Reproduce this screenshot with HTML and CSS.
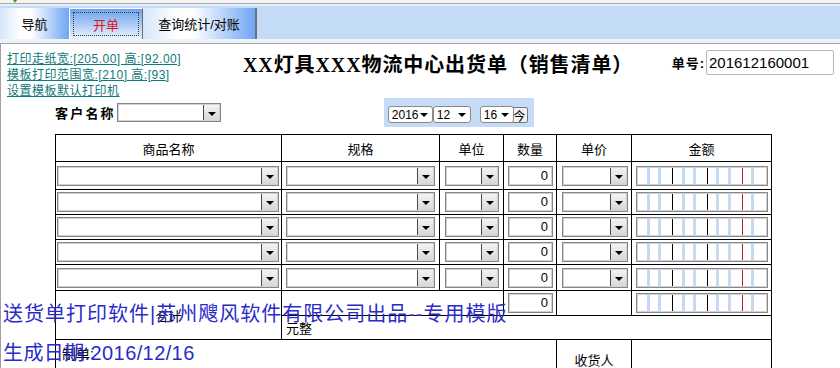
FILE: index.html
```
<!DOCTYPE html>
<html lang="zh-CN">

<head>
    <meta charset="UTF-8">
    <title>出货单</title>
    <link rel="stylesheet" href="styles.css">
</head>

<body>
    <div class="topbar"><span class="mark"></span></div>

    <div class="toolbar">
        <div class="tab tab-nav">导航</div>
        <div class="tab tab-on"><span class="focus">开单</span></div>
        <div class="tab tab-query">查询统计/对账</div>
    </div>

    <div class="sheet">
        <div class="head">
            <div class="links">
                <a href="#">打印走纸宽:[205.00] 高:[92.00]</a>
                <a href="#">模板打印范围宽:[210] 高:[93]</a>
                <a href="#">设置模板默认打印机</a>
            </div>
            <h1 class="title">XX灯具XXX物流中心出货单（销售清单）</h1>
            <div class="billno">
                <b>单号:</b>
                <span class="billno-box">201612160001</span>
            </div>
        </div>

        <div class="meta">
            <b class="cust-label">客户名称</b>
            <div class="combo cust"><span class="drop"></span></div>
            <div class="datebar">
                <span class="dsel dsel-y">2016</span>
                <span class="dsel dsel-m">12</span>
                <span class="dsel dsel-d">16</span>
                <span class="today">今</span>
            </div>
        </div>

        <table class="bill">
            <colgroup>
                <col class="w-name">
                <col class="w-spec">
                <col class="w-unit">
                <col class="w-qty">
                <col class="w-price">
                <col class="w-money">
            </colgroup>
            <tr class="row-head">
                <th>商品名称</th>
                <th>规格</th>
                <th>单位</th>
                <th>数量</th>
                <th>单价</th>
                <th>金额</th>
            </tr>
            <tr class="row-1">
                <td><div class="combo c-name"><span class="drop"></span></div></td>
                <td><div class="combo c-spec"><span class="drop"></span></div></td>
                <td><div class="combo c-unit"><span class="drop"></span></div></td>
                <td><div class="qty">0</div></td>
                <td><div class="combo c-price"><span class="drop"></span></div></td>
                <td><div class="money"><i></i><i></i><i class="k"></i><i></i><i></i><i class="k"></i><i></i><i></i><i class="r"></i><i></i><i class="e"></i></div></td>
            </tr>
            <tr>
                <td><div class="combo c-name"><span class="drop"></span></div></td>
                <td><div class="combo c-spec"><span class="drop"></span></div></td>
                <td><div class="combo c-unit"><span class="drop"></span></div></td>
                <td><div class="qty">0</div></td>
                <td><div class="combo c-price"><span class="drop"></span></div></td>
                <td><div class="money"><i></i><i></i><i class="k"></i><i></i><i></i><i class="k"></i><i></i><i></i><i class="r"></i><i></i><i class="e"></i></div></td>
            </tr>
            <tr>
                <td><div class="combo c-name"><span class="drop"></span></div></td>
                <td><div class="combo c-spec"><span class="drop"></span></div></td>
                <td><div class="combo c-unit"><span class="drop"></span></div></td>
                <td><div class="qty">0</div></td>
                <td><div class="combo c-price"><span class="drop"></span></div></td>
                <td><div class="money"><i></i><i></i><i class="k"></i><i></i><i></i><i class="k"></i><i></i><i></i><i class="r"></i><i></i><i class="e"></i></div></td>
            </tr>
            <tr>
                <td><div class="combo c-name"><span class="drop"></span></div></td>
                <td><div class="combo c-spec"><span class="drop"></span></div></td>
                <td><div class="combo c-unit"><span class="drop"></span></div></td>
                <td><div class="qty">0</div></td>
                <td><div class="combo c-price"><span class="drop"></span></div></td>
                <td><div class="money"><i></i><i></i><i class="k"></i><i></i><i></i><i class="k"></i><i></i><i></i><i class="r"></i><i></i><i class="e"></i></div></td>
            </tr>
            <tr class="row-5">
                <td><div class="combo c-name"><span class="drop"></span></div></td>
                <td><div class="combo c-spec"><span class="drop"></span></div></td>
                <td><div class="combo c-unit"><span class="drop"></span></div></td>
                <td><div class="qty">0</div></td>
                <td><div class="combo c-price"><span class="drop"></span></div></td>
                <td><div class="money"><i></i><i></i><i class="k"></i><i></i><i></i><i class="k"></i><i></i><i></i><i class="r"></i><i></i><i class="e"></i></div></td>
            </tr>
            <tr class="row-sum">
                <td rowspan="2" class="sum-label">合计</td>
                <td colspan="2"></td>
                <td><div class="qty">0</div></td>
                <td></td>
                <td><div class="money"><i></i><i></i><i class="k"></i><i></i><i></i><i class="k"></i><i></i><i></i><i class="r"></i><i></i><i class="e"></i></div></td>
            </tr>
            <tr class="row-words">
                <td colspan="5" class="words">元整</td>
            </tr>
            <tr class="row-sign">
                <td colspan="4" class="maker">制单:</td>
                <td class="receiver">收货人</td>
                <td></td>
            </tr>
        </table>

        <div class="stamp">
            <p>送货单打印软件|苏州飕风软件有限公司出品--专用模版</p>
            <p>生成日期:2016/12/16</p>
        </div>
    </div>
</body>

</html>
```

FILE: styles.css
```
* {
    margin: 0;
    padding: 0;
    box-sizing: border-box;
}

html,
body {
    height: 368px;
    overflow: hidden;
}

body {
    font-family: "Liberation Sans", "Noto Sans CJK SC", sans-serif;
    font-size: 13px;
    color: #000;
    background: #fff;
}

/* top strip + tab bar */
.topbar {
    height: 4px;
    background: #f3f3f3;
    border-bottom: 1px solid #a9a9a9;
    position: relative;
}

.mark {
    position: absolute;
    left: 13px;
    top: 0;
    border-left: 2px solid transparent;
    border-right: 2px solid transparent;
    border-top: 3px solid #3c9c1c;
}

.toolbar {
    height: 40px;
    padding-top: 4px;
    display: flex;
    background: linear-gradient(#e8f0fb 0, #e8f0fb 2px, #c3dbf7 2px, #c3dbf7 35px, #eef3fa 35px);
    border-bottom: 1px solid #a4a4a4;
}

.tab {
    height: 31px;
    display: flex;
    justify-content: center;
    align-items: center;
    font-size: 13px;
    background: linear-gradient(to right, #d6e6fb, #ffffff 30%, #ffffff 45%, #6ea6f3);
}

.tab-nav {
    width: 69px;
}

.tab-on {
    width: 74px;
    padding: 3px;
    color: #e0141c;
    background: linear-gradient(#6fa2ee, #a4c5f5 45%, #eef4fc);
    border-top: 1px solid #fff;
    border-left: 1px solid #fff;
    border-right: 1px solid #6a6a6a;
}

.focus {
    flex: 1;
    align-self: stretch;
    display: flex;
    justify-content: center;
    align-items: center;
    border: 1px dotted #1f4a2a;
}

.tab-query {
    width: 114px;
    border-right: 2px solid #707070;
}

/* sheet */
.sheet {
    position: relative;
    height: 325px;
    border-left: 1px solid #a0a0a0;
}

.head {
    display: flex;
    height: 53px;
}

.links {
    width: 242px;
    padding: 7px 0 0 6px;
    display: flex;
    flex-direction: column;
    align-items: flex-start;
}

.links a {
    font-size: 12px;
    line-height: 16px;
    letter-spacing: 0.5px;
    color: #0f7a7c;
}

.title {
    margin-top: 9px;
    font: bold 20px/24px "Liberation Serif", "Noto Sans CJK SC", serif;
    letter-spacing: 0.9px;
}

.billno {
    margin-left: auto;
    margin-right: 6px;
    margin-top: 6px;
    height: 25px;
    display: flex;
    align-items: center;
}

.billno b {
    font-size: 13px;
    letter-spacing: 1px;
}

.billno-box {
    width: 128px;
    height: 25px;
    margin-left: 1px;
    padding-left: 2px;
    display: flex;
    align-items: center;
    font-size: 15px;
    border: 1px solid #b8b8b8;
    border-radius: 2px;
}

.meta {
    height: 31px;
    display: flex;
    align-items: center;
}

.cust-label {
    margin-left: 54px;
    font-size: 13px;
    letter-spacing: 2.2px;
}

.datebar {
    width: 150px;
    height: 29px;
    margin-left: 163px;
    padding: 0 0 4px 4px;
    display: flex;
    align-items: flex-end;
    background: #c6dbf5;
}

.dsel {
    position: relative;
    height: 17px;
    padding-left: 3px;
    display: flex;
    align-items: center;
    font-size: 12px;
    background: #fff;
    border: 1px solid #8a8a8a;
    border-radius: 3px;
}

.dsel::after {
    content: '';
    position: absolute;
    right: 4px;
    top: 6px;
    border-left: 4px solid transparent;
    border-right: 4px solid transparent;
    border-top: 4px solid #000;
}

.dsel-y {
    width: 45px;
}

.dsel-m {
    width: 38px;
}

.dsel-d {
    width: 34px;
    margin-left: 9px;
}

.today {
    width: 17px;
    height: 16px;
    margin-left: -3px;
    display: flex;
    justify-content: center;
    align-items: center;
    font-size: 12px;
    background: #f2f2f2;
    border: 1px solid #7a7a7a;
    border-radius: 2px;
}

/* combo box, windows classic */
.combo {
    position: relative;
    height: 20px;
    background: #fff;
    border: 1px solid #858585;
    box-shadow: inset 0 0 0 1px #d2d2d2;
}

.drop {
    position: absolute;
    right: 1px;
    top: 1px;
    bottom: 1px;
    width: 16px;
    background: linear-gradient(#f3f3f3, #d8d8d8);
    border-left: 1px solid #4a4a4a;
}

.drop::after {
    content: '';
    position: absolute;
    left: 4px;
    top: 7px;
    border-left: 4px solid transparent;
    border-right: 4px solid transparent;
    border-top: 4px solid #000;
}

.cust {
    width: 104px;
    height: 19px;
    margin-left: 1px;
}

/* bill table */
.bill {
    margin: 6px 0 0 54px;
    width: 716px;
    border-collapse: collapse;
    table-layout: fixed;
}

.w-name {
    width: 226px;
}

.w-spec {
    width: 158px;
}

.w-unit {
    width: 64px;
}

.w-qty {
    width: 53px;
}

.w-price {
    width: 75px;
}

.w-money {
    width: 140px;
}

.bill th,
.bill td {
    border: 1px solid #000;
    padding: 0;
}

.bill th {
    height: 27px;
    font-weight: normal;
    font-size: 13px;
}

.bill td {
    height: 25px;
}

.bill .row-1 td {
    height: 28px;
}

.bill .row-5 td {
    height: 26px;
}

.c-name {
    width: 222px;
    margin-left: 1px;
}

.c-spec {
    width: 149px;
    margin-left: 4px;
}

.c-unit {
    width: 54px;
    margin-left: 5px;
}

.c-price {
    width: 66px;
    margin-left: 5px;
}

.qty {
    width: 45px;
    height: 20px;
    margin-left: 4px;
    padding-right: 4px;
    text-align: right;
    font-size: 13px;
    line-height: 18px;
    background: #fff;
    border: 1px solid #858585;
    box-shadow: inset 0 0 0 1px #d2d2d2;
}

.money {
    width: 132px;
    height: 20px;
    margin-left: 4px;
    padding: 1px;
    display: grid;
    grid-template-columns: repeat(11, 1fr);
    border: 1px solid #8a8a8a;
    box-shadow: inset 0 0 0 1px #d2d2d2;
}

.money i {
    background: linear-gradient(to left, #c4d9f2 3px, transparent 3px);
}

.money i.k {
    background: linear-gradient(to left, #000 1px, transparent 1px);
}

.money i.r {
    background: linear-gradient(to left, #b3202a 1px, transparent 1px);
}

.money i.e {
    background: none;
}

.sum-label {
    text-align: center;
}

.bill .row-words td {
    height: 24px;
}

.words {
    padding-left: 4px !important;
}

.bill .row-sign td {
    height: 40px;
}

.maker {
    vertical-align: top;
    padding: 3px 0 0 6px !important;
    font-size: 14px;
}

.receiver {
    text-align: center;
}

/* watermark line over the sheet */
.stamp {
    position: absolute;
    left: 2px;
    top: 258px;
    color: #2b2bc9;
    font-size: 20px;
    line-height: 24px;
    letter-spacing: 1px;
}

.stamp p + p {
    margin-top: 15px;
    letter-spacing: 0.4px;
}
```
